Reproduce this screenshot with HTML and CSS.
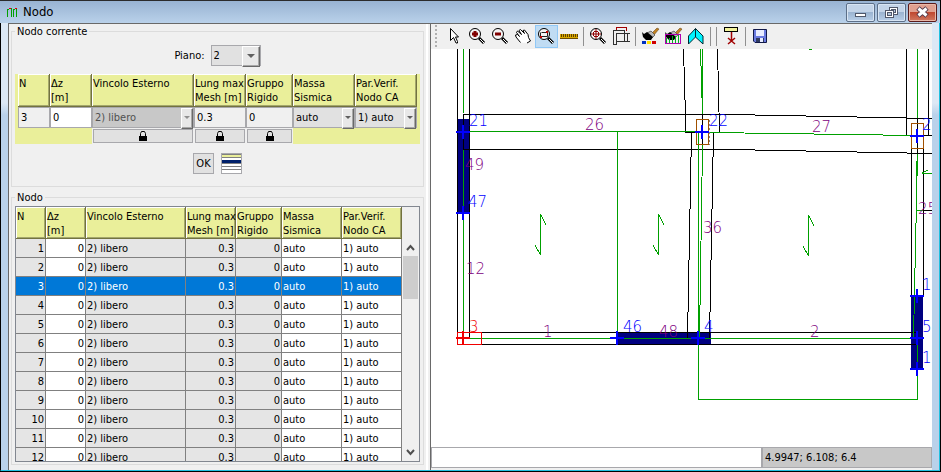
FILE: index.html
```html
<!DOCTYPE html>
<html lang="it">
<head>
    <meta charset="utf-8">
    <title>Nodo</title>
    <link rel="stylesheet" href="styles.css">
</head>
<body>
    <svg class="defs" width="0" height="0">
        <symbol id="lock" viewBox="0 0 8 11">
            <path d="M1.5 5V2.5L2.5 .5H5.5L6.5 2.5V5" fill="none" stroke="#000"/>
            <rect y="5" width="8" height="5"/>
        </symbol>
        <symbol id="lens" viewBox="0 0 23 23">
            <path d="M13 13L18 18" stroke="#000" stroke-width="3"/>
            <path d="M14 14L18 18" stroke="#fff" stroke-width="1"/>
            <circle cx="9" cy="9" r="5.5" fill="#f4f4f4" stroke="#000"/>
        </symbol>
        <symbol id="brush" viewBox="0 0 23 23">
            <path d="M13 8L18 3L20 4L15 10Z" fill="#c08020" stroke="#5a3a10" stroke-width=".5"/>
            <path d="M8 8L12 6L16 10L13 13Z" fill="#b8b8b8" stroke="#444" stroke-width=".7"/>
            <path d="M3 7L5 9L8 7L14 12L12 15H7L4 12Z" fill="#000"/>
        </symbol>
    </svg>

    <div class="window">
        <div class="titlebar">
            <svg class="app-icon" width="11" height="10" shape-rendering="crispEdges">
                <path d="M.5 10V2M4.5 10V2M6.5 10V2M9.5 10V2" stroke="#00a000"/>
                <path d="M1 2.5H2M4 1.5H5M7 2.5H8" stroke="#00a000"/>
                <path d="M2 1.5H4M8 1.5H10" stroke="#e00000"/>
            </svg>
            <span class="title">Nodo</span>
            <button class="win-btn" aria-label="Minimize">
                <svg width="27" height="17"><rect x="8.5" y="9.5" width="10" height="3" fill="#fff" stroke="#50586a"/></svg>
            </button>
            <button class="win-btn" aria-label="Restore">
                <svg width="27" height="17" fill="none" shape-rendering="crispEdges">
                    <rect x="11.500" y="3.500" width="8" height="7" fill="#fff" stroke="#50586a"/><rect x="13.500" y="5.500" width="4" height="3" fill="#b0c4dc" stroke="#50586a"/>
                    <rect x="7.500" y="6.500" width="8" height="7" fill="#fff" stroke="#50586a"/><rect x="9.500" y="8.500" width="4" height="3" fill="#b0c4dc" stroke="#50586a"/>
                </svg>
            </button>
            <button class="win-btn close" aria-label="Close">
                <svg width="27" height="17"><path d="M9 4L18 12M18 4L9 12" stroke="#50384a" stroke-width="5"/><path d="M9.500 4.500L17.500 11.500M17.500 4.500L9.500 11.500" stroke="#fff" stroke-width="3"/></svg>
            </button>
        </div>

        <div class="client">
            <div class="left-panel">
                <fieldset class="group">
                    <legend>Nodo corrente</legend>
                    <div class="piano-row">
                        <label for="piano">Piano:</label>
                        <span class="combo big"><select id="piano"><option>2</option></select></span>
                    </div>

                    <div class="editor">
                        <label class="head" for="n">N</label>
                        <label class="head" for="dz">Δz<br>[m]</label>
                        <label class="head" for="vincolo">Vincolo Esterno</label>
                        <label class="head" for="lung">Lung max<br>Mesh [m]</label>
                        <label class="head" for="gruppo">Gruppo<br>Rigido</label>
                        <label class="head" for="massa">Massa<br>Sismica</label>
                        <label class="head" for="verif">Par.Verif.<br>Nodo CA</label>

                        <input class="field" id="n" value="3" readonly>
                        <input class="field white" id="dz" value="0">
                        <span class="combo off"><select id="vincolo" disabled><option>2) libero</option></select></span>
                        <input class="field" id="lung" value="0.3" readonly>
                        <input class="field" id="gruppo" value="0" readonly>
                        <span class="combo"><select id="massa"><option>auto</option></select></span>
                        <span class="combo"><select id="verif"><option>1) auto</option></select></span>

                        <div class="lock-cell first"><button aria-label="Blocca vincolo"><svg width="8" height="11"><use href="#lock"/></svg></button></div>
                        <div class="lock-cell"><button aria-label="Blocca mesh"><svg width="8" height="11"><use href="#lock"/></svg></button></div>
                        <div class="lock-cell"><button aria-label="Blocca gruppo"><svg width="8" height="11"><use href="#lock"/></svg></button></div>
                    </div>

                    <div class="actions">
                        <button class="ok">OK</button>
                        <button class="list" aria-label="Lista">
                            <svg width="19" height="19" shape-rendering="crispEdges">
                                <rect width="19" height="19" fill="#fff"/>
                                <rect y="1" width="19" height="2" fill="#eaef9a"/>
                                <path d="M0 .5H19M0 3.500H19M0 12.500H19M0 15.500H19" stroke="#808080"/>
                                <rect y="6" width="19" height="3" fill="#00206a"/>
                                <path d="M0 9.500H19" stroke="#808080"/>
                            </svg>
                        </button>
                    </div>
                </fieldset>

                <fieldset class="group nodes">
                    <legend>Nodo</legend>
                    <div class="table-box">
                        <div class="table-clip">
                            <table>
                                <colgroup>
                                    <col class="c-n"><col class="c-dz"><col class="c-vin"><col class="c-lung"><col class="c-gr"><col class="c-ms"><col class="c-pv">
                                </colgroup>
                                <thead>
                                    <tr>
                                        <th>N</th>
                                        <th>Δz<br>[m]</th>
                                        <th>Vincolo Esterno</th>
                                        <th>Lung max<br>Mesh [m]</th>
                                        <th>Gruppo<br>Rigido</th>
                                        <th>Massa<br>Sismica</th>
                                        <th>Par.Verif.<br>Nodo CA</th>
                                    </tr>
                                </thead>
                                <tbody id="rows"></tbody>
                            </table>
                        </div>
                        <div class="scrollbar">
                            <svg width="17" height="18"><path d="M5 12L8.500 8L12 12" fill="none" stroke="#505050" stroke-width="2"/></svg>
                            <div class="thumb"></div>
                            <svg width="17" height="18"><path d="M5 7L8.500 11L12 7" fill="none" stroke="#505050" stroke-width="2"/></svg>
                        </div>
                    </div>
                </fieldset>
            </div>

            <div class="right-panel">
                <div class="toolbar">
                    <span class="grip"></span>
                    <button aria-label="Seleziona"><svg width="23" height="23"><path d="M7.500 3.500V15.500L10.500 12.500L13 18H14.500V16.500L12.500 12H15.500Z" fill="#fff" stroke="#000"/></svg></button>
                    <button aria-label="Zoom avanti"><svg width="23" height="23"><use href="#lens"/><path d="M6 9H12M9 6V12" stroke="#800000" stroke-width="3"/></svg></button>
                    <button aria-label="Zoom indietro"><svg width="23" height="23"><use href="#lens"/><path d="M6 9H12" stroke="#800000" stroke-width="3"/></svg></button>
                    <button aria-label="Sposta"><svg width="23" height="23"><path d="M8.500 17.500L4 12L3.500 10L5.500 9.500L7.500 11.500L4.500 7.500L5.500 6L9.500 9.500L7 5.500L8.500 4.500L12.500 8.500L11 5.500L12.500 5L16 9.500L16.500 12.500L18.500 16L15 18" fill="#fff" stroke="#000"/></svg></button>
                    <button class="active" aria-label="Zoom finestra"><svg width="23" height="23"><use href="#lens"/><path d="M6.500 7.500H12.500V11.500H5.500V7.500" fill="none" stroke="#222"/><path d="M5 11H7V13H5ZM11 6H13V8H11Z" fill="#c00000"/></svg></button>
                    <button aria-label="Misura"><svg width="23" height="23" shape-rendering="crispEdges"><rect x="2" y="9" width="18" height="5" fill="#d8a800"/><path d="M2 13.500H20" stroke="#6a4a00"/><path d="M3 10.500H20" stroke="#604000" stroke-width="3" stroke-dasharray="1 1"/></svg></button>
                    <span class="sep"></span>
                    <button aria-label="Zoom tutto"><svg width="23" height="23"><use href="#lens"/><path d="M4 9H14M9 4V14" stroke="#900000"/><path d="M6.500 7V11M11.500 7V11M7 6.500H11M7 11.500H11" stroke="#900000"/></svg></button>
                    <button aria-label="Telaio"><svg width="23" height="23" fill="none" shape-rendering="crispEdges"><path d="M6.500 6V2.500H16.500V6" stroke="#a00000"/><path d="M3.500 20V5.500H14.500V8.500M3 19.500H6M6.500 20V8.500M6 16.500H14.500V8M6 8.500H20M17.500 9V16M15 16.500H20" stroke="#303030"/></svg></button>
                    <span class="sep"></span>
                    <button aria-label="Colori"><svg width="23" height="23"><use href="#brush"/><rect x="3" y="16" width="4" height="3" fill="#0030c0"/><rect x="8" y="16" width="4" height="3" fill="#ffe000"/><rect x="13" y="16" width="4" height="3" fill="#d00000"/></svg></button>
                    <button aria-label="Colori telaio"><svg width="23" height="23"><use href="#brush"/><g fill="none" shape-rendering="crispEdges"><path d="M4.500 19V13M7.500 19V13M10.500 19V11M13.500 19V11M16.500 19V10" stroke="#00b020"/><path d="M3.500 9.500H18.500V18.500H3.500Z" stroke="#b000b0"/></g></svg></button>
                    <button aria-label="Vista 3D"><svg width="23" height="23"><path d="M10.500 3.500L18 11V19L10.500 12L3.500 19V11ZM10.500 3.500V12" fill="#00f4ff" stroke="#002830"/></svg></button>
                    <span class="sep"></span>
                    <span class="sep"></span>
                    <button aria-label="Elimina"><svg width="23" height="23"><path d="M11.500 6V15M8 13L15 19M15 13L8 19" stroke="#a00000" stroke-width="1.500"/><rect x="4.500" y="2.500" width="13" height="4" fill="#f2f29a" stroke="#000"/></svg></button>
                    <span class="sep"></span>
                    <button aria-label="Salva"><svg width="23" height="23"><path d="M4.500 4.500H17.500V17.500H6L4.500 16Z" fill="#6a7ae0" stroke="#101848"/><rect x="7" y="5" width="8" height="6" fill="#e8ecff"/><rect x="7" y="13" width="8" height="4" fill="#303a60"/><rect x="11" y="13" width="3" height="4" fill="#e8ecff"/></svg></button>
                </div>

                <!-- floor plan: walls, beams and node labels -->
                <div class="plan">
                    <svg width="100%" height="100%">
                        <g transform="translate(-431 -49)">
                            <g class="wall">
                                <rect x="458" y="119" width="12" height="94"/>
                                <rect x="617" y="332" width="94" height="13"/>
                                <rect x="911" y="296" width="12" height="74"/>
                            </g>
                            <g class="edge">
                                <path d="M457.500 49V344M469.500 49V338M463.500 114V150"/>
                                <path d="M463 114.500H730L932 118.500M463 149.500H730L932 153.500"/>
                                <path d="M683.500 49L686 132.500H697M717.500 49L719.500 132.500H709M702.500 114V150"/>
                                <path d="M691.500 132L687.500 338.500H709.500L713.500 132"/>
                                <path d="M906.500 49V135.500H932M928.500 49V135M911.500 148V296M923.500 148V296M917.500 118V154"/>
                                <path d="M457 332.500H917M457 344.500H917M923 210.500H932"/>
                            </g>
                            <g class="axis">
                                <path d="M463.500 49V113M463.500 150V338M463 131.500H697M709 132.500L917 135.500M617.500 131V338M463 338.500H917"/>
                                <path d="M700.500 49L702.500 114M702.500 49V114M698.500 132V399.500H917.500V345M702.500 145L699.500 338"/>
                                <path d="M917.500 49V118M916.500 161V210.500H923M917.500 154L913.500 338"/>
                                <path d="M922 173.500H932M922 173L928 170M809 49.500H812"/>
                                <path d="M546 225L540.500 214V255L535 245M664 225L658.500 214V255L653 245M814 226L808.500 215V256L803 246"/>
                            </g>
                            <g class="pillar">
                                <rect x="696.500" y="119.500" width="12" height="25"/>
                                <rect x="911.500" y="123.500" width="12" height="25"/>
                            </g>
                            <path class="pillar-side" d="M709.500 120V145"/>
                            <g class="current">
                                <path d="M481.500 332.500H457.500V344.500H481.500"/>
                                <path d="M481.500 332V345"/>
                                <path class="node" d="M456 338H470M463 331V345"/>
                            </g>
                            <g class="cross">
                                <path d="M456 132H470M463 125V139M456 213H470M463 206V220"/>
                                <path d="M695 132H709M702 125V139M910 136H924M917 129V143"/>
                                <path d="M610 338H624M617 331V345M691 338H705M698 331V345"/>
                                <path d="M910 296H924M917 289V303M910 338H924M917 331V345M910 369H924M917 362V376"/>
                            </g>
                            <g class="beam-no">
                                <text x="585" y="130">26</text><text x="812" y="132">27</text>
                                <text x="465" y="170">49</text><text x="703" y="233">36</text>
                                <text x="466" y="274">12</text><text x="918" y="214">25</text>
                                <text x="543" y="337">1</text><text x="659" y="337">48</text><text x="810" y="337">2</text>
                            </g>
                            <g class="node-no">
                                <text x="469" y="126">21</text><text x="709" y="126">22</text><text x="922" y="130">2</text>
                                <text x="468" y="207">47</text><text x="623" y="332">46</text><text x="704" y="332">4</text>
                                <text x="922" y="290">1</text><text x="922" y="332">5</text><text x="922" y="363">1</text>
                            </g>
                            <text class="current-no" x="469" y="332">3</text>
                        </g>
                    </svg>
                </div>

                <div class="status">
                    <div class="status-msg"></div>
                    <div class="status-pos">4.9947; 6.108; 6.4</div>
                </div>
            </div>
        </div>
    </div>

    <script>
var html = "";
for (var i = 1; i <= 12; i++) {
    html += '<tr' + (i == 3 ? ' class="selected"' : '') + '>' +
        '<td class="num grey">' + i + '</td><td class="num">0</td><td class="grey">2) libero</td>' +
        '<td class="num grey">0.3</td><td class="num grey">0</td><td>auto</td><td class="verif">1) auto</td></tr>';
}
document.getElementById("rows").innerHTML = html;
    </script>
</body>
</html>
```

FILE: styles.css
```css
* {
    box-sizing: border-box;
}

body {
    margin: 0;
    font-family: Tahoma, "DejaVu Sans Condensed", "DejaVu Sans", sans-serif;
    font-size: 11px;
    line-height: 14px;
    color: #000;
}

button, input, select {
    font: inherit;
    color: inherit;
    margin: 0;
    padding: 0;
    border: 0;
    border-radius: 0;
}

svg {
    display: block;
}

.defs {
    position: absolute;
}

/* window frame */
.window {
    height: 100vh;
    display: flex;
    flex-direction: column;
    background: #b9d1ea;
    border-right: 1px solid #000;
    border-bottom: 1px solid #000;
}

.titlebar {
    flex: none;
    height: 23px;
    display: flex;
    align-items: center;
    gap: 2px;
    padding: 0 3px 0 7px;
    border-top: 1px solid #2b2b2b;
    background: linear-gradient(#98b3d2, #b9d1ea);
}

.title {
    flex: 1;
    padding-left: 3px;
    font-size: 13px;
}

.win-btn {
    width: 29px;
    height: 19px;
    border: 1px solid #5c6f88;
    border-radius: 2px;
    background: linear-gradient(#c3d4e8 50%, #9bb4d1 50%, #b8cfe8);
    box-shadow: inset 0 0 0 1px #d8e5f3;
}

.win-btn.close {
    border-color: #5a1a1a;
    background: linear-gradient(#e0a090 45%, #c04830 50%, #d07860);
    box-shadow: inset 0 0 0 1px #e8b8a8;
}

.client {
    flex: 1;
    min-height: 0;
    display: flex;
    border-left: 1px solid #000;
    border-right: 1px solid #20c0e0;
    border-bottom: 1px solid #20c0e0;
    padding: 0 7px 0 7px;
    background: linear-gradient(#dce8f5, #dce8f5 80px, #b9d1ea 92px);
}

/* left side */
.left-panel {
    flex: none;
    width: 422px;
    display: flex;
    flex-direction: column;
    padding: 0 6px 5px 2px;
    border-left: 1px solid #696969;
    border-top: 1px solid #696969;
    background: linear-gradient(to right, #f0f0f0 417px, #fff 417px, #fff 419px, #f0f0f0 419px);
}

.group {
    margin: 0;
    min-width: 0;
    padding: 0 3px 12px;
    border: 1px solid #dcdcdc;
}

.group legend {
    padding: 1px 2px 0;
}

.piano-row {
    display: flex;
    justify-content: center;
    align-items: center;
    gap: 6px;
    padding-top: 6px;
    height: 27px;
}

.combo {
    position: relative;
    display: block;
    height: 21px;
    border: 1px solid #a8a8ac;
    background: #e1e1e1;
}

.combo select {
    display: block;
    width: 100%;
    height: 100%;
    padding-left: 2px;
    appearance: none;
    background: transparent;
    opacity: 1;
}

/* raised drop-down button */
.combo::before {
    content: "";
    position: absolute;
    top: 0;
    right: 0;
    width: 10px;
    height: 19px;
    background: #e8e8e8;
    border: 1px solid;
    border-color: #fff #696969 #696969 #fff;
    box-shadow: inset -1px -1px 0 #a8a8a8;
    pointer-events: none;
}

.combo::after {
    content: "";
    position: absolute;
    top: 8px;
    right: 3px;
    border: 3px solid transparent;
    border-top-color: #606060;
    border-bottom: 0;
    pointer-events: none;
}

.combo.big {
    width: 50px;
}

.combo.big::before {
    width: 16px;
}

.combo.big::after {
    right: 5px;
    border-width: 4px 4px 0;
}

.combo.off {
    background: #c8c8c8;
    color: #505050;
}

.combo.off::after {
    border-top-color: #909090;
}

.editor {
    display: grid;
    grid-template-columns: 32px 42px 102px 52px 47px 62px 62px;
    grid-template-rows: 33px 21px 16px;
    margin-top: 8px;
    padding: 0 3px;
    background: #eaef9a;
}

.head, th {
    border: solid #72723f;
    border-width: 0 1px 1px 0;
    background: #eaef9a;
    box-shadow: inset 1px 1px 0 #fff, inset -1px -1px 0 #a4a76c;
}

.head {
    padding: 3px 0 0 1px;
    white-space: nowrap;
}

.field {
    min-width: 0;
    width: 100%;
    padding-left: 2px;
    border: 1px solid #a8a8ac;
    background: #f0f0f0;
}

.field.white {
    background: #fff;
}

.lock-cell {
    padding: 1px;
    background: #f0f0f0;
}

.lock-cell.first {
    grid-column: 3;
}

.lock-cell button {
    display: flex;
    justify-content: center;
    align-items: center;
    width: 100%;
    height: 14px;
    border: 1px solid #a8a8ac;
    background: #e1e1e1;
}

.actions {
    display: flex;
    justify-content: center;
    gap: 7px;
    margin-top: 9px;
}

.actions button {
    width: 21px;
    height: 21px;
    border: 1px solid #a8a8ac;
    background: #e1e1e1;
}

/* node table */
.nodes {
    flex: 1;
    min-height: 0;
    display: flex;
    flex-direction: column;
    margin-top: 3px;
    padding: 1px 3px 2px;
}

.table-box {
    flex: 1;
    min-height: 0;
    display: flex;
    border: 1px solid #828790;
    background: #f0f0f0;
}

.table-clip {
    flex: 1;
    overflow: hidden;
}

table {
    width: 386px;
    table-layout: fixed;
    border-collapse: separate;
    border-spacing: 0;
}

.c-n { width: 30px; }
.c-dz { width: 40px; }
.c-vin { width: 100px; }
.c-lung { width: 50px; }
.c-gr { width: 46px; }
.c-ms { width: 60px; }
.c-pv { width: 60px; }

th {
    height: 32px;
    padding: 3px 0 0 1px;
    font-weight: normal;
    text-align: left;
    vertical-align: top;
    white-space: nowrap;
}

td {
    height: 19px;
    padding: 2px 1px 0;
    border-right: 1px solid #808080;
    border-bottom: 1px solid #808080;
    background: #fff;
}

td.grey {
    background: #e5e5e5;
}

td.num {
    text-align: right;
}

.selected td {
    background: #0078d7;
    color: #fff;
}

.scrollbar {
    width: 17px;
    margin-top: 31px;
    display: flex;
    flex-direction: column;
}

.thumb {
    width: 15px;
    height: 43px;
    margin: 0 1px auto;
    background: #cdcdcd;
}

/* right side */
.right-panel {
    flex: 1;
    min-width: 0;
    display: flex;
    flex-direction: column;
    border-left: 1px solid #696969;
    border-top: 1px solid #696969;
    background: #f0f0f0;
}

.toolbar {
    flex: none;
    height: 25px;
    display: flex;
    padding-top: 1px;
}

.toolbar button {
    width: 23px;
    height: 23px;
    background: none;
}

.toolbar button.active {
    background: #c0dcf3;
    box-shadow: inset 0 0 0 1px #90c8f6;
}

.grip {
    width: 2px;
    margin: 0 6px 0 4px;
    background: repeating-linear-gradient(#b0b0b0 0 2px, #f0f0f0 2px 4px);
}

.sep {
    width: 1px;
    height: 19px;
    margin: 2px 3px 0 2px;
    background: #909090;
}

.plan {
    flex: 1;
    min-height: 0;
    overflow: hidden;
    background: #fff;
}

.plan path, .plan rect {
    fill: none;
    stroke-width: 1px;
    shape-rendering: crispEdges;
}

.plan .wall rect { fill: #000080; }
.plan .edge path { stroke: #000; }
.plan .axis path { stroke: #00a000; }
.plan .pillar rect { stroke: #a05000; }
.plan .pillar-side { stroke: #808080; stroke-dasharray: 2px 2px; }
.plan .current path { stroke: #f00000; }
.plan .cross path { stroke: #0000ff; stroke-width: 2px; }
.plan .current .node { stroke-width: 2px; }

.plan text {
    font-family: "DejaVu Sans Light", "DejaVu Sans", sans-serif;
    font-size: 15px;
    font-weight: 200;
}

.beam-no { fill: #800080; }
.node-no { fill: #0000ff; }
.current-no { fill: #f00000; }

.status {
    flex: none;
    height: 23px;
    display: flex;
    padding-bottom: 2px;
}

.status div {
    border: 1px solid #a8a8ac;
}

.status-msg {
    flex: 1;
    background: #fff;
}

.status-pos {
    width: 170px;
    padding: 3px 2px;
    background: #c8c8c8;
}
```
